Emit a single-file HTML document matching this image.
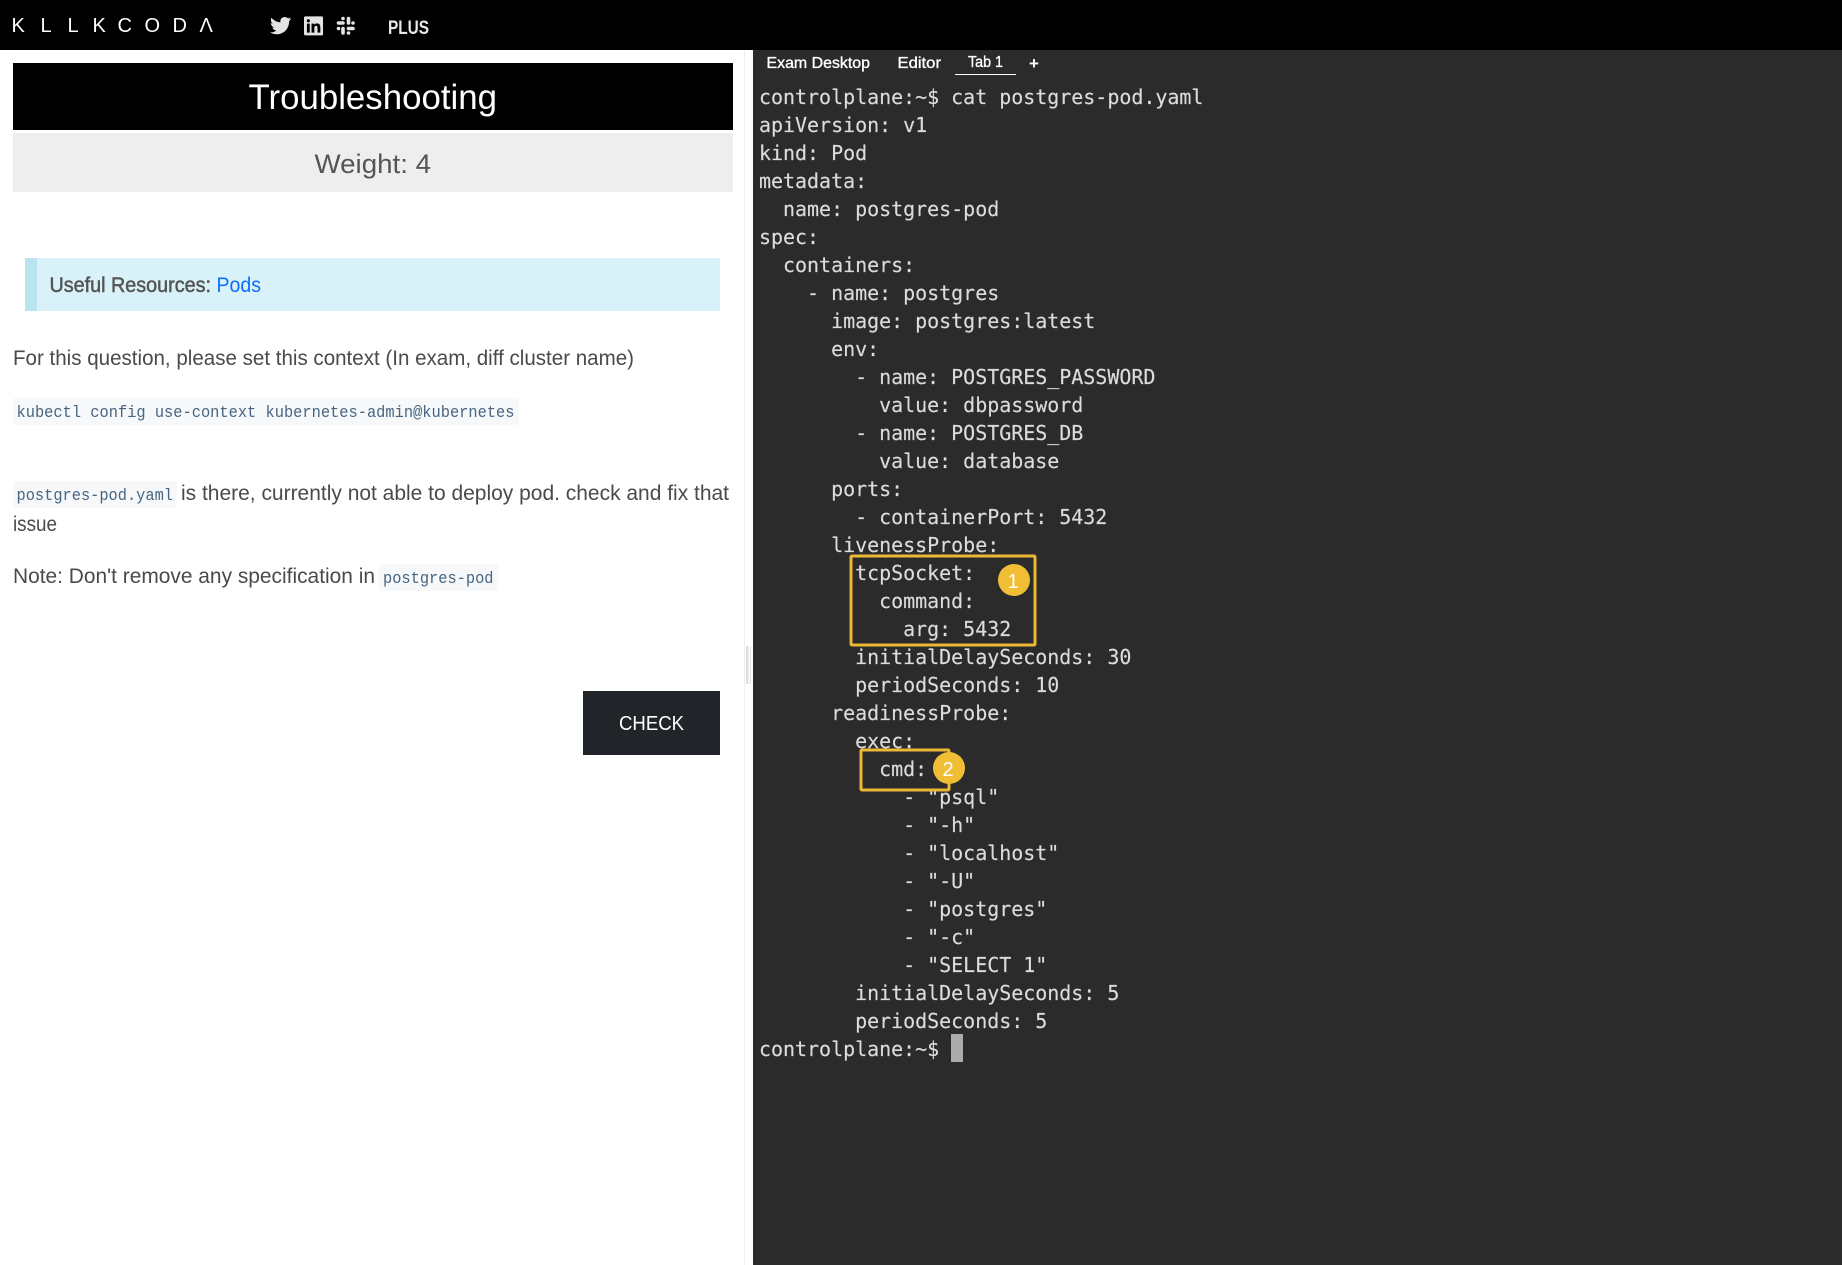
<!DOCTYPE html>
<html><head><meta charset="utf-8"><title>Killercoda</title>
<style>
html,body{margin:0;padding:0;background:#fff;width:1842px;height:1265px;overflow:hidden}
#term{position:absolute;left:753px;top:50px;width:1089px;height:1215px;background:#2b2b2b}
pre{position:absolute;left:759px;top:83px;margin:0;font:20px/28px "DejaVu Sans Mono",monospace;color:#dcdcdc;letter-spacing:-.03px;-webkit-text-stroke:.15px #dcdcdc}
svg{position:absolute;left:0;top:0}
</style></head><body>
<div id="term"></div>
<pre>controlplane:~$ cat postgres-pod.yaml
apiVersion: v1
kind: Pod
metadata:
  name: postgres-pod
spec:
  containers:
    - name: postgres
      image: postgres:latest
      env:
        - name: POSTGRES_PASSWORD
          value: dbpassword
        - name: POSTGRES_DB
          value: database
      ports:
        - containerPort: 5432
      livenessProbe:
        tcpSocket:
          command:
            arg: 5432
        initialDelaySeconds: 30
        periodSeconds: 10
      readinessProbe:
        exec:
          cmd:
            - "psql"
            - "-h"
            - "localhost"
            - "-U"
            - "postgres"
            - "-c"
            - "SELECT 1"
        initialDelaySeconds: 5
        periodSeconds: 5
controlplane:~$</pre>
<svg width="1842" height="1265" viewBox="0 0 1842 1265" font-family="Liberation Sans, sans-serif">
<rect x="0" y="0" width="1842" height="50" fill="#000"/>
<text y="32" x="11.5 40.5 67.5 92.5 117.5 144.5 172.5 199.5" font-size="20" fill="#fff">KLLKCODΛ</text>
<g fill="#e4e4e4">
<path transform="translate(270 15) scale(.0415)" d="M459.37 151.716c.325 4.548.325 9.097.325 13.645 0 138.72-105.583 298.558-298.558 298.558-59.452 0-114.68-17.219-161.137-47.106 8.447.974 16.568 1.299 25.34 1.299 49.055 0 94.213-16.568 130.274-44.832-46.132-.975-84.792-31.188-98.112-72.772 6.498.974 12.995 1.624 19.818 1.624 9.421 0 18.843-1.3 27.614-3.573-48.081-9.747-84.143-51.98-84.143-102.985v-1.299c13.969 7.797 30.214 12.67 47.431 13.319-28.264-18.843-46.781-51.005-46.781-87.391 0-19.492 5.197-37.36 14.294-52.954 51.655 63.675 129.3 105.258 216.365 109.807-1.624-7.797-2.599-15.918-2.599-24.04 0-57.828 46.782-104.934 104.934-104.934 30.213 0 57.502 12.67 76.67 33.137 23.715-4.548 46.456-13.32 66.599-25.34-7.798 24.366-24.366 44.833-46.132 57.827 21.117-2.273 41.584-8.122 60.426-16.243-14.292 20.791-32.161 39.308-52.628 54.253z"/>
<path transform="translate(304 15) scale(.0425)" d="M416 32H31.9C14.3 32 0 46.5 0 64.3v383.4C0 465.5 14.3 480 31.9 480H416c17.6 0 32-14.5 32-32.3V64.3c0-17.8-14.4-32.3-32-32.3zM135.4 416H69V202.2h66.5V416zm-33.2-243c-21.3 0-38.5-17.3-38.5-38.5S80.9 96 102.2 96c21.2 0 38.5 17.3 38.5 38.5 0 21.3-17.2 38.5-38.5 38.5zm282.1 243h-66.4V312c0-24.8-.5-56.7-34.5-56.7-34.6 0-39.9 27-39.9 54.9V416h-66.4V202.2h63.7v29.2h.9c8.9-16.8 30.6-34.5 62.9-34.5 67.2 0 79.7 44.3 79.7 101.9V416z"/>
</g>
<g transform="translate(336 16)" stroke="#e4e4e4" stroke-width="3.6" stroke-linecap="round" fill="none">
<path d="M2.5 7H7M12.5 2.5V7M12.5 12.5H17M7 12.5V17"/>
<path d="M7 2.5h.01M17 7h.01M12.5 17h.01M2.5 12.5h.01"/>
</g>
<text x="388" y="34" font-size="19" font-weight="bold" fill="#e8e8e8" textLength="41" lengthAdjust="spacingAndGlyphs">PLUS</text>

<!-- left pane -->
<rect x="13" y="63" width="720" height="67" fill="#000"/>
<text x="248.5" y="109" font-size="35" fill="#fff" textLength="248.5" lengthAdjust="spacingAndGlyphs">Troubleshooting</text>
<rect x="13" y="133" width="720" height="59" fill="#eee"/>
<text x="314.5" y="173" font-size="27" fill="#555" textLength="116.5" lengthAdjust="spacingAndGlyphs">Weight: 4</text>
<rect x="25" y="258" width="695" height="53" fill="#d9f1f8"/>
<rect x="25" y="258" width="12" height="53" fill="#b9e5ee"/>
<text x="49.5" y="292" font-size="21.5" fill="#555" stroke="#555" stroke-width=".5" textLength="161.5" lengthAdjust="spacingAndGlyphs">Useful Resources:</text>
<text x="216.5" y="292" font-size="21.5" fill="#0d6efd" textLength="44.5" lengthAdjust="spacingAndGlyphs">Pods</text>
<text x="13" y="365" font-size="21" fill="#4a4a4a" textLength="621" lengthAdjust="spacingAndGlyphs">For this question, please set this context (In exam, diff cluster name)</text>
<rect x="13" y="398" width="506" height="27" rx="3" fill="#f6f8fa"/>
<text x="16.5" y="417" font-family="Liberation Mono, monospace" font-size="17" fill="#476582" textLength="498" lengthAdjust="spacingAndGlyphs">kubectl config use-context kubernetes-admin@kubernetes</text>
<rect x="13" y="481" width="164" height="27" rx="3" fill="#f6f8fa"/>
<text x="16.5" y="500" font-family="Liberation Mono, monospace" font-size="17" fill="#476582" textLength="156.5" lengthAdjust="spacingAndGlyphs">postgres-pod.yaml</text>
<text x="181" y="500" font-size="21" fill="#4a4a4a" textLength="548" lengthAdjust="spacingAndGlyphs">is there, currently not able to deploy pod. check and fix that</text>
<text x="13" y="531" font-size="21" fill="#4a4a4a" textLength="44" lengthAdjust="spacingAndGlyphs">issue</text>
<text x="13" y="583" font-size="21" fill="#4a4a4a" textLength="362" lengthAdjust="spacingAndGlyphs">Note: Don't remove any specification in</text>
<rect x="379" y="564" width="119" height="27" rx="3" fill="#f6f8fa"/>
<text x="383" y="583" font-family="Liberation Mono, monospace" font-size="17" fill="#476582" textLength="110.5" lengthAdjust="spacingAndGlyphs">postgres-pod</text>
<rect x="583" y="691" width="137" height="64" fill="#212529"/>
<text x="619" y="730" font-size="20" fill="#fff" textLength="65" lengthAdjust="spacingAndGlyphs">CHECK</text>
<rect x="744" y="50" width="1" height="1215" fill="#eee"/>
<rect x="746" y="646" width="2.5" height="38" fill="#ddd"/>
<rect x="750" y="646" width="1" height="38" fill="#ddd"/>

<!-- tabs -->
<g font-size="15.5" fill="#fff">
<text x="766.5" y="68" textLength="103.5" lengthAdjust="spacingAndGlyphs" stroke="#fff" stroke-width=".35">Exam Desktop</text>
<text x="897.5" y="68" textLength="43.5" lengthAdjust="spacingAndGlyphs" stroke="#fff" stroke-width=".35">Editor</text>
<text x="968" y="67" textLength="35" lengthAdjust="spacingAndGlyphs" stroke="#fff" stroke-width=".35">Tab 1</text>
<text x="1029" y="69" font-size="17" font-weight="bold">+</text>
</g>
<rect x="955" y="74" width="61" height="1" fill="#fff"/>

<!-- cursor -->
<rect x="951" y="1034" width="12" height="28" fill="#ababab"/>

<!-- annotations -->
<g fill="none" stroke="#edb832" stroke-width="3">
<rect x="851" y="556" width="184" height="89" rx="1"/>
<rect x="861" y="750" width="88" height="40" rx="1"/>
</g>
<circle cx="1014" cy="580" r="16" fill="#f0bd34"/>
<circle cx="949" cy="768" r="16" fill="#f0bd34"/>
<g font-size="20" fill="#fff" text-anchor="middle">
<text x="1013" y="588">1</text>
<text x="948" y="776">2</text>
</g>
</svg>
</body></html>
